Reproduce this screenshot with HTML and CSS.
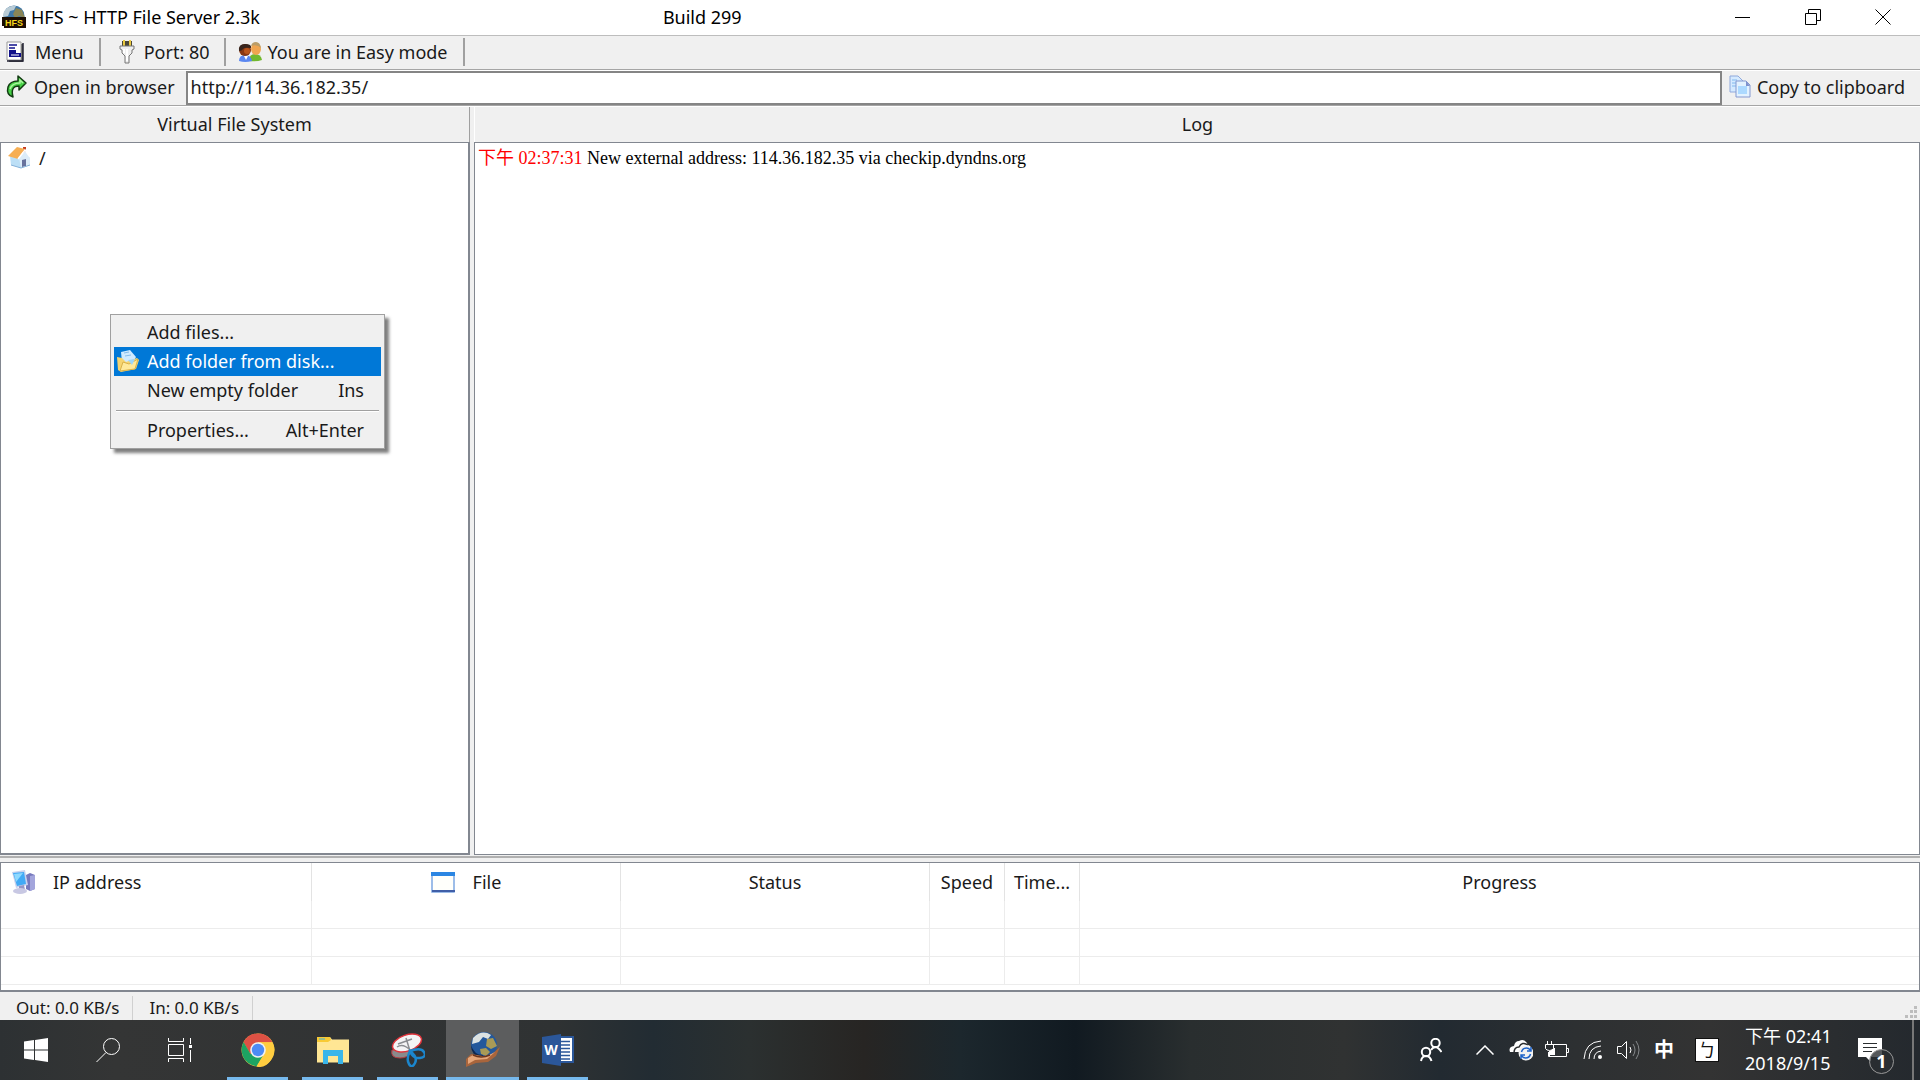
FILE: index.html
```
<!DOCTYPE html>
<html lang="en">
<head>
    <meta charset="UTF-8">
    <meta name="viewport" content="width=device-width, initial-scale=1.0">
    <title>HFS ~ HTTP File Server 2.3k</title>
    <link rel="stylesheet" href="styles.css">
</head>
<body>
<header class="titlebar">
    <svg class="app-icon" viewBox="0 0 24 24">
        <circle cx="12" cy="11" r="10.500" fill="#3f78a8"/>
        <path d="M5 3q5-3 9-2l-2 4-4 1-2 5-5 1q0-6 4-9z" fill="#b9cbd5"/>
        <path d="M14 3l6 2 3 8-6-2-4 2-2-4z" fill="#8a8556"/>
        <path d="M0 12h24v11H2v-2H0z" fill="#1b0d02"/>
        <text class="app-mark" x="12" y="21">HFS</text>
    </svg>
    <h1>HFS ~ HTTP File Server 2.3k</h1>
    <span class="build">Build 299</span>
    <div class="window-buttons">
        <button aria-label="Minimize"><svg viewBox="0 0 16 16"><path d="M0 8.500h15"/></svg></button>
        <button aria-label="Restore"><svg viewBox="0 0 16 16"><path d="M.5 4.500h11v11H.5zM3.500 4.500v-4h12v11h-4"/></svg></button>
        <button aria-label="Close"><svg viewBox="0 0 16 16"><path d="M.5.5l15 15M15.500.5l-15 15"/></svg></button>
    </div>
</header>

<nav class="toolbar">
    <button class="tool">
        <svg class="icon" viewBox="0 0 24 24">
            <path d="M5 4h14v18H5z" fill="#555"/>
            <path d="M3 2h14v18H3z" fill="#fff" stroke="#999"/>
            <path d="M5 5h8M5 8h6" stroke="#10108a" stroke-width="1.500"/>
            <path d="M5 10h7v3h5v4H5z" fill="#10108a"/>
            <path d="M7 15h8" stroke="#fff"/>
            <path d="M3 21h16V3" fill="none" stroke="#223" stroke-width="1.500"/>
        </svg>
        Menu
    </button>
    <button class="tool tool-port">
        <svg class="icon" viewBox="0 0 24 24">
            <path d="M7 1h10v6H7z" fill="#4a4636"/>
            <path d="M9 0v6M15 0v6" stroke="#e8c840" stroke-width="2"/>
            <path d="M5 6h14v3l-2 1v3l-3 3v7h-4v-7l-3-3v-3L5 9z" fill="#eee" stroke="#777"/>
            <path d="M9 9v4M12 9v12" stroke="#fff" stroke-width="2"/>
        </svg>
        Port: 80
    </button>
    <button class="tool tool-mode">
        <svg class="icon" viewBox="0 0 24 24">
            <path d="M11 21q0-7 6-7t7 6q-5 2-13 1z" fill="#72b92f"/>
            <ellipse cx="18" cy="9" rx="5" ry="6" fill="#f0a550"/>
            <path d="M13 6q1-4 5-4t5 6q-4-4-10-2z" fill="#ba9d68"/>
            <path d="M1 21q0-6 6-6t7 6q-7 2-13 0z" fill="#5b87f0"/>
            <ellipse cx="7" cy="10" rx="6" ry="6" fill="#883713"/>
            <path d="M1 11q-1-7 6-7t6 4q-7-1-8 1t-4 2z" fill="#37241d"/>
            <circle cx="9" cy="11" r="3" fill="#b8541c"/>
            <path d="M6 16l2 4 2-4z" fill="#fff"/>
        </svg>
        You are in Easy mode
    </button>
</nav>

<div class="address-bar">
    <button class="tool tool-open">
        <svg class="icon" viewBox="0 0 24 24">
            <path d="M8 22Q1 20 3 12q2-6 10-6V1l8 7-7 7v-4q-9 0-6 11z" fill="#46d146" stroke="#123b12" stroke-width="1.500" stroke-linejoin="round"/>
            <path d="M5 14q2-6 10-6V5l3 3" fill="none" stroke="#a9f49d" stroke-width="1.500"/>
        </svg>
        Open in browser
    </button>
    <input type="text" aria-label="Server address" value="http://114.36.182.35/">
    <button class="tool tool-copy">
        <svg class="icon" viewBox="0 0 24 24">
            <path d="M2 1h8l5 5v11H2z" fill="#d5eaff" stroke="#8fa8dc"/>
            <path d="M4 5h5M4 8h5M4 11h5" stroke="#82b9ee"/>
            <path d="M8 6h10l4 4v12H8z" fill="#e3f2ff" stroke="#8498cf"/>
            <path d="M10 11h9v8h-9z" fill="#acd9ff"/>
            <path d="M18 6l4 5h-4z" fill="#7d91cd"/>
        </svg>
        Copy to clipboard
    </button>
</div>

<main class="panes">
    <section class="pane pane-files">
        <h2>Virtual File System</h2>
        <div class="pane-body tree">
            <svg class="icon" viewBox="0 0 24 24">
                <path d="M16 1h3v6h-3z" fill="#c63c20"/>
                <path d="M3 10l7-6 4 9v9L4 19z" fill="#bcdff6"/>
                <path d="M12 12l6-7 5 6v8l-9 3z" fill="#dcecf9"/>
                <path d="M1 10l9-9 8 2-7 10z" fill="#f6ae53"/>
                <path d="M11 13l7-9 5 7" fill="none" stroke="#fff" stroke-width="1.500"/>
                <path d="M15 14l4-1v7l-4 1z" fill="#68729d"/>
                <path d="M4 19l10 3 9-3" fill="none" stroke="#85b2da"/>
            </svg>
            <span>/</span>
        </div>
    </section>
    <section class="pane pane-log">
        <h2>Log</h2>
        <div class="pane-body log">
            <p><time>下午 02:37:31</time> New external address: 114.36.182.35 via checkip.dyndns.org</p>
        </div>
    </section>
</main>

<section class="connections">
    <table>
        <colgroup>
            <col class="col-address">
            <col class="col-wide">
            <col class="col-wide">
            <col class="col-small">
            <col class="col-small">
            <col>
        </colgroup>
        <thead>
            <tr>
                <th class="left">
                    <div class="th-label">
                        <svg class="icon" viewBox="0 0 24 24">
                            <path d="M15 5l4-2 5 2v14l-5 2-4-2z" fill="#7779bd"/>
                            <path d="M19 6l5-1v14l-5 2z" fill="#a3a5dc"/>
                            <path d="M1 2l13-2 3 15-12 3z" fill="#c8d2ee"/>
                            <path d="M2 3l11-1 2 12-9 2z" fill="#42aaf5"/>
                            <path d="M3 4l9-1-7 9z" fill="#8ed9ff"/>
                            <path d="M8 16l5-1 1 5H8z" fill="#9697c6"/>
                            <ellipse cx="9" cy="21" rx="7" ry="3" fill="#c8c8e3"/>
                        </svg>
                        IP address
                    </div>
                </th>
                <th>
                    <div class="th-label">
                        <svg class="icon" viewBox="0 0 24 24">
                            <path d="M1 3h22v19H1z" fill="#fffffb" stroke="#7da8e2" stroke-width="1.500"/>
                            <path d="M0 2h24v4H0z" fill="#2b86e3"/>
                            <path d="M1 21h23" stroke="#405fa8" stroke-width="2"/>
                        </svg>
                        File
                    </div>
                </th>
                <th>Status</th>
                <th>Speed</th>
                <th>Time...</th>
                <th>Progress</th>
            </tr>
        </thead>
        <tbody>
            <tr><td></td><td></td><td></td><td></td><td></td><td></td></tr>
            <tr><td></td><td></td><td></td><td></td><td></td><td></td></tr>
            <tr><td></td><td></td><td></td><td></td><td></td><td></td></tr>
        </tbody>
    </table>
</section>

<footer class="statusbar">
    <span>Out: 0.0 KB/s</span>
    <span>In: 0.0 KB/s</span>
    <svg class="grip" viewBox="0 0 12 12"><path d="M9 0h3v3H9zM5 4h3v3H5zM9 4h3v3H9zM0 9h3v3H0zM5 9h3v3H5zM9 9h3v3H9z" fill="#bdbdbd"/></svg>
</footer>

<div class="context-menu" role="menu">
    <button role="menuitem"><span>Add files...</span></button>
    <button role="menuitem" class="selected">
        <svg class="icon" viewBox="0 0 24 24">
            <path d="M5 3l9-2 6 7-5 9-9-4z" fill="#cfeaff"/>
            <path d="M8 4l5-1M9 7l6-1" stroke="#86bdea"/>
            <path d="M1 8l5 1 4 4 11-4 2 2-3 9-15 3-3-2z" fill="#f6d470"/>
            <path d="M4 22l3-9 6 2 9-5-3 10z" fill="#ffe99b" stroke="#d9b24b"/>
            <path d="M12 11l7-1-3 6z" fill="#9ed6fa"/>
        </svg>
        <span>Add folder from disk...</span>
    </button>
    <button role="menuitem"><span>New empty folder</span><kbd>Ins</kbd></button>
    <hr>
    <button role="menuitem"><span>Properties...</span><kbd>Alt+Enter</kbd></button>
</div>

<footer class="taskbar">
    <button class="sys" aria-label="Start">
        <svg width="24" height="24" viewBox="0 0 24 24"><path d="M0 3.500L10 2v9.500H0zM11 2L24 0v11.500H11zM0 12.500h10V22L0 20.500zM11 12.500h13V24l-13-2z" fill="#fff"/></svg>
    </button>
    <button class="sys" aria-label="Search">
        <svg class="line" width="24" height="24" viewBox="0 0 24 24"><circle cx="15.500" cy="8.500" r="8"/><path d="M10 14.500L.5 24"/></svg>
    </button>
    <button class="sys" aria-label="Task view">
        <svg class="line" width="24" height="24" viewBox="0 0 24 24"><path d="M.5 0v3.500h15V0M.5 6.500h15v11H.5zM.5 24v-3.500h15V24M22.500 0v6M22.500 12v12"/><path d="M21 7h3v3h-3z" fill="#fff" stroke="none"/></svg>
    </button>
    <button class="app" aria-label="Chrome">
        <svg width="34" height="34" viewBox="0 0 34 34">
            <circle cx="17" cy="17" r="16.500" fill="#ffcd40"/>
            <path d="M17 17L9.500 21.300 2.500 9.300Q7 .5 17 .5t14.500 8.700H17z" fill="#dd5144"/>
            <path d="M2.600 9Q-1 16 2 23.500T15.500 33.400L23.500 20 17 17l-7.500 4z" fill="#1da362"/>
            <path d="M17 9.200h14.500Q36 18 30 27T15.500 33.400L24 20z" fill="#ffcd40"/>
            <circle cx="17" cy="17" r="7.800" fill="#f1f1f1"/>
            <circle cx="17" cy="17" r="6.200" fill="#4c8bf5"/>
        </svg>
    </button>
    <button class="app" aria-label="File Explorer">
        <svg width="34" height="34" viewBox="0 0 34 34">
            <path d="M1 4h13l2 2.500h17v23H1z" fill="#ffe694"/>
            <path d="M1 4h13l1 3-3 2H1z" fill="#f8ca35"/>
            <path d="M3 6h6" stroke="#3ab1e4"/>
            <path d="M7 17h20v14h-5v-8H12v8H7z" fill="#3ab6ea"/>
        </svg>
    </button>
    <button class="app" aria-label="Snipping Tool">
        <svg width="34" height="34" viewBox="0 0 34 34">
            <path d="M1 17q-2 8 8 8 7 0 11-5l-2-4z" fill="#8a8a8c" stroke="#b83a40"/>
            <ellipse cx="16" cy="10" rx="15" ry="8" transform="rotate(-18 16 10)" fill="#f4f4f5" stroke="#e0343c" stroke-width="1.500"/>
            <path d="M6 14q6-4 13 3M15 5l4 13M7 11l14-5" fill="none" stroke="#8b8d91" stroke-width="1.500"/>
            <path d="M19 18q11-4 14 1t-4 6-10-7zM19 18q-4 8-1 13t6-1-5-12z" fill="none" stroke="#1b86cd" stroke-width="2.500"/>
        </svg>
    </button>
    <button class="app active" aria-label="HFS">
        <svg width="34" height="36" viewBox="0 0 34 36">
            <circle cx="18" cy="13" r="13" fill="#24589b"/>
            <path d="M7 6q9-9 18-3l-3 4-5-2-4 5-7 2z" fill="#dce2e2"/>
            <path d="M21 7l6-1 4 8-6 3-5-3zM14 17l6-1 4 4-4 4-5-2z" fill="#a99a56"/>
            <path d="M5 13q3 10 12 10l-1 3q-11-2-11-13z" fill="#10284f"/>
            <path d="M0 35v-8l5-5 12 2q5 1 9-2l8-7-4 9-8 6-12 1z" fill="#a9653c"/>
            <path d="M2 26l5-3 12 2 10-5-8 7-12 1-7 4z" fill="#e5a67a"/>
            <path d="M7 23q8 4 17 0" fill="none" stroke="#6e351c" stroke-width="1.500"/>
        </svg>
    </button>
    <button class="app" aria-label="Word">
        <svg width="34" height="34" viewBox="0 0 34 34">
            <path d="M17 4h15v25H17z" fill="#fff" stroke="#2b579a" stroke-width="2"/>
            <path d="M18 8.500h11M18 12h11M18 15.500h11M18 19h11M18 22.500h11M18 26h11" stroke="#2b579a" stroke-width="1.500"/>
            <path d="M1 4L20 1v32L1 30z" fill="#2b579a"/>
            <text class="word-mark" x="10" y="22">W</text>
        </svg>
    </button>

    <div class="tray">
        <button class="people" aria-label="People">
            <svg class="line bold" width="22" height="24" viewBox="0 0 22 24"><circle cx="15.500" cy="5" r="4.200"/><circle cx="6" cy="14" r="4.200"/><path d="M11 12q2-3 4.500-3t6 5M1 23q1-5 5-5t5.500 5"/></svg>
        </button>
        <button aria-label="Show hidden icons">
            <svg class="line" width="18" height="10" viewBox="0 0 18 10"><path d="M.5 9.500L9 1l8.500 8.500" stroke-width="1.500"/></svg>
        </button>
        <button aria-label="OneDrive">
            <svg width="24" height="22" viewBox="0 0 24 22">
                <path d="M1 13q-2-5 4-6 1-5 5-5 6-3 9 4 4 1 4 7H1z" fill="#fff"/>
                <path d="M5 14q0-6 5-6 3-6 9-2" fill="none" stroke="#2b2e30" stroke-width="1.500"/>
                <circle cx="17" cy="14" r="7.500" fill="#f2f2f2"/>
                <path d="M12.500 13q1-4 5-4 2 0 4 2M22 8v4h-4M21.500 15q-1 4-5 4-2 0-4-2M12 20v-4h4" fill="none" stroke="#1e63c8" stroke-width="1.500"/>
            </svg>
        </button>
        <button aria-label="Battery">
            <svg class="line" width="24" height="18" viewBox="0 0 24 18"><path d="M8 3.500h13.500v12h-18V11M22 7.500h1.500v4H22M2.500 0v3M6.500 0v3M.5 3.500h8v4q-1 2-4 2t-4-2zM4.500 10v5"/><path d="M5 10l4-3h1v7H5z" fill="#fff" stroke="none"/></svg>
        </button>
        <button aria-label="Network">
            <svg class="line" width="20" height="20" viewBox="0 0 20 20"><path d="M1 19Q2 2 18 1M6 19Q6 7 18 6M11 19q0-7 7-8"/><circle cx="17" cy="17" r="2" fill="#fff" stroke="none"/></svg>
        </button>
        <button aria-label="Volume">
            <svg class="line" width="24" height="20" viewBox="0 0 24 20"><path d="M.5 6.500h4l5-5v17l-5-5h-4zM13 7q2 3 0 6"/><path d="M16 4q4 6 0 12M19 1q6 9 0 18" stroke="#85888a"/></svg>
        </button>
        <button class="ime" aria-label="Chinese input">中</button>
        <button class="bopomofo" aria-label="Bopomofo input"><span>ㄅ</span></button>
        <div class="clock">
            <span>下午 02:41</span>
            <span>2018/9/15</span>
        </div>
        <button class="notices" aria-label="Notifications">
            <svg width="24" height="24" viewBox="0 0 24 24"><path d="M0 0h24v19H13v5l-5-5H0z" fill="#fff"/><path d="M5 5.500h14M5 9.500h14M5 13.500h9" stroke="#2a2e30"/></svg>
            <span class="badge">1</span>
        </button>
    </div>
</footer>
</body>
</html>
```
FILE: styles.css
```
* { margin: 0; padding: 0; box-sizing: border-box; }
body { height: 100vh; display: flex; flex-direction: column; overflow: hidden; background: #f0f0f0; color: #1a1a1a; font: 18px/24px "Noto Sans", "Noto Sans CJK TC", sans-serif; }
button { border: none; background: none; font: inherit; color: inherit; cursor: pointer; }
h1, h2, th { font-size: 18px; font-weight: normal; }
svg { display: block; flex: none; }
.icon { width: 24px; height: 24px; }

/* title bar */
.titlebar { display: flex; align-items: center; height: 35px; padding: 0 2px 2px; background: #fff; color: #000; }
.app-icon { width: 24px; height: 24px; margin-right: 5px; }
.app-mark { fill: #f4d51b; font: bold 9px "Liberation Sans", sans-serif; text-anchor: middle; }
.build { margin-left: 403px; }
.window-buttons { display: flex; margin-left: auto; }
.window-buttons button { width: 70px; height: 33px; display: flex; align-items: center; justify-content: center; }
.window-buttons svg { width: 16px; height: 16px; fill: none; stroke: #000; }

/* toolbars */
.toolbar { display: flex; align-items: center; height: 35px; padding-bottom: 2px; border-top: 1px solid #bdbdbd; border-bottom: 1px solid #a5a5a5; }
.tool { display: flex; align-items: center; gap: 7px; height: 28px; padding: 0 15px 0 4px; white-space: nowrap; }
.toolbar .tool { border-right: 2px solid #a0a0a0; }
.toolbar .tool-port { gap: 5px; padding-left: 14px; padding-right: 14px; }
.toolbar .tool-mode { gap: 6px; padding-left: 12px; }
.address-bar { display: flex; align-items: center; height: 36px; border-top: 1px solid #fff; border-bottom: 1px solid #a5a5a5; }
.address-bar .tool { gap: 5px; padding-bottom: 2px; }
.address-bar .tool-open { padding-left: 5px; padding-right: 11px; }
.address-bar .tool-copy { padding-left: 6px; }
.address-bar input { flex: 1; height: 34px; padding: 0 3px 2px; border: 2px solid #858585; background: #fff; font: inherit; color: inherit; }

/* file tree and log */
.panes { flex: 1; display: grid; grid-template-columns: 470px 1fr; column-gap: 4px; min-height: 0; border-top: 1px solid #fff; }
.pane { display: flex; flex-direction: column; min-width: 0; }
.pane h2 { height: 35px; line-height: 34px; text-align: center; }
.pane-files h2 { border-right: 1px solid #a0a0a0; }
.pane-log h2 { border-left: 1px solid #fff; }
.pane-body { flex: 1; background: #fff; border: 1px solid #828790; }
.pane-files .pane-body { border-right-width: 2px; border-bottom-width: 2px; }
.tree { display: flex; align-items: flex-start; gap: 8px; padding: 3px 6px; }
.log { padding: 3px; color: #000; font: 18px/24px "Liberation Serif", "Noto Sans CJK TC", serif; }
.log time { color: #f00; }

/* connections */
.connections { margin-top: 7px; padding-bottom: 5px; border: 1px solid #828790; border-bottom-width: 2px; background: #fff; box-shadow: 0 -4px #f0f0f0, 0 -6px #b0b0b0; }
table { width: 100%; border-collapse: separate; border-spacing: 0; table-layout: fixed; }
.col-address { width: 311px; }
.col-wide { width: 309px; }
.col-small { width: 75px; }
th { height: 38px; padding: 0 6px; border-right: 1px solid #e3e3e3; white-space: nowrap; }
.th-label { display: flex; align-items: center; justify-content: center; gap: 18px; }
.left .th-label { justify-content: flex-start; padding-left: 4px; }
td { height: 28px; border-right: 1px solid #ececec; border-bottom: 1px solid #ececec; }
th:last-child, td:last-child { border-right: none; }

/* status bar */
.statusbar { display: flex; align-items: flex-end; height: 28px; font-size: 17px; }
.statusbar span { height: 24px; padding: 0 13px 0 16px; border-right: 1px solid #d0d0d0; white-space: nowrap; }
.grip { width: 12px; height: 12px; margin: 0 3px 2px auto; }

/* context menu, opened over the tree */
.context-menu { position: absolute; left: 110px; top: 314px; width: 275px; padding: 3px; background: #f0f0f0; border: 1px solid #a0a0a0; box-shadow: 4px 4px 3px rgba(0, 0, 0, 0.5); }
.context-menu button { position: relative; display: flex; align-items: center; width: 100%; height: 29px; padding: 0 17px 2px 33px; white-space: nowrap; }
.context-menu .icon { position: absolute; left: 2px; top: 2px; }
.context-menu .selected { background: #0078d7; color: #fff; }
.context-menu kbd { margin-left: auto; font: inherit; }
.context-menu hr { margin: 5px 2px 4px; border: none; border-top: 1px solid #a0a0a0; border-bottom: 1px solid #fff; }

/* taskbar */
.taskbar { display: flex; height: 60px; color: #fff; background: linear-gradient(90deg, #2d3133 0%, #343535 6%, #2f3233 29%, #222c33 34%, #2b3030 39%, #272523 45%, #1c272d 50%, #111a21 56%, #292e2f 62%, #303232 70%, #222a31 75%, #2d3032 82%, #333 89%, #24292e 100%); }
.taskbar button { display: flex; align-items: center; justify-content: center; }
.sys { width: 72px; }
.app { width: 73px; margin-right: 2px; background: linear-gradient(#76b9ed, #76b9ed) bottom / 61px 3px no-repeat; }
.sys + .app { margin-left: 5px; }
.active { background: linear-gradient(#76b9ed, #76b9ed) bottom / 100% 3px no-repeat #5c5d5e; }
.word-mark { fill: #fff; font: bold 14px "Noto Sans", sans-serif; text-anchor: middle; }
.line { fill: none; stroke: #fff; }
.bold { stroke-width: 2; }
.tray { display: flex; margin-left: auto; padding-right: 13px; border-right: 2px solid #777; margin-right: 6px; }
.tray button { width: 36px; }
.tray .people { width: 72px; }
.tray .ime { width: 34px; font-size: 20px; font-weight: bold; }
.tray .bopomofo { width: 52px; }
.bopomofo span { width: 24px; height: 24px; border: 1px solid #111; background: #fff; color: #111; font-size: 18px; line-height: 22px; }
.clock { display: flex; flex-direction: column; align-items: flex-start; justify-content: center; width: 108px; padding-left: 12px; line-height: 27px; white-space: nowrap; }
.tray .notices { position: relative; width: 58px; }
.badge { position: absolute; right: 5px; bottom: 6px; width: 25px; height: 25px; border: 1px solid #999; border-radius: 50%; background: rgba(42, 46, 50, 0.8); font-size: 18px; line-height: 22px; font-weight: bold; }
```
